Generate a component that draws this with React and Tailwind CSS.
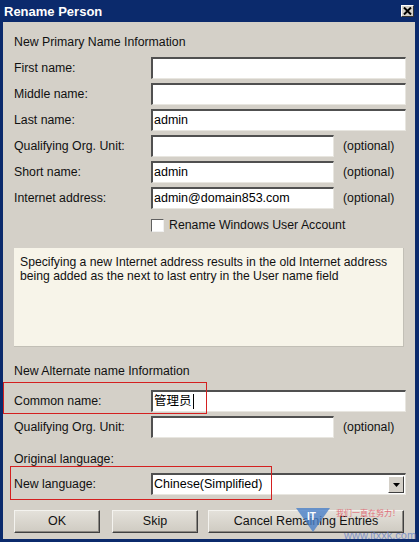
import React from 'react';

const FONT = { fontFamily: '"Liberation Sans", Arial, "Noto Sans CJK SC", sans-serif' };

function Field({ value, width = 'w-[255px]', children }) {
  return (
    <div
      className={`${width} h-[22px] bg-white border-t-2 border-l-2 border-t-[#505050] border-l-[#505050] border-b border-r border-b-[#e8e6e0] border-r-[#e8e6e0] flex items-center pl-[1px] text-[12.5px] text-black`}
    >
      {value}
      {children}
    </div>
  );
}

function Row({ label, value, short = false, optional = false, className = '' }) {
  return (
    <div className={`flex items-center h-[22px] ${className}`}>
      <div className="w-[137px] shrink-0 pt-[1px] text-[12.3px] text-[#111]">{label}</div>
      <Field value={value} width={short ? 'w-[183px]' : 'w-[255px]'} />
      {optional && <span className="ml-[9px] text-[12.3px] text-[#111]">(optional)</span>}
    </div>
  );
}

function Button({ children, width }) {
  return (
    <div
      className={`${width} h-[23px] flex items-center justify-center text-[12.5px] text-[#111] bg-gradient-to-b from-[#e4e1da] to-[#cfcbc2] border border-t-[#f4f3ef] border-l-[#f4f3ef] border-b-[#404040] border-r-[#404040] shadow-[inset_-1px_-1px_0_#8c8983]`}
    >
      {children}
    </div>
  );
}

export default function App() {
  return (
    <div className="w-[419px] h-[542px] bg-[#0b2a6c] flex flex-col overflow-hidden" style={FONT}>
      {/* Title bar */}
      <div className="h-[22px] shrink-0 flex items-center justify-between pl-[4px] pr-[5px]">
        <span className="text-white font-bold text-[13px] leading-none">Rename Person</span>
        <div className="w-[13px] h-[12px] bg-[#d4d0c8] border border-t-white border-l-white border-b-[#333] border-r-[#333] flex items-center justify-center">
          <svg width="9" height="8" viewBox="0 0 9 8">
            <path d="M1 0.5 L8 7.5 M8 0.5 L1 7.5" stroke="#000" strokeWidth="2" />
          </svg>
        </div>
      </div>

      {/* Body */}
      <div className="flex-1 ml-[3px] mr-[4px] mb-[3px] bg-[#d4d0c8] relative flex flex-col pl-[11px] pr-[9px] pt-[13px]">
        <div className="text-[12.3px] leading-[15px] text-[#111]">New Primary Name Information</div>

        <Row label="First name:" className="mt-[7px]" />
        <Row label="Middle name:" className="mt-[4px]" />
        <Row label="Last name:" value="admin" className="mt-[4px]" />
        <Row label="Qualifying Org. Unit:" short optional className="mt-[4px]" />
        <Row label="Short name:" value="admin" short optional className="mt-[4px]" />
        <Row label="Internet address:" value="admin@domain853.com" short optional className="mt-[4px]" />

        <div className="flex items-center h-[16px] mt-[8px] pl-[137px]">
          <div className="w-[13px] h-[13px] bg-white border-t border-l border-t-[#606060] border-l-[#606060] border-b border-r border-b-[#f0f0f0] border-r-[#f0f0f0]" />
          <span className="ml-[5px] text-[12.3px] text-[#111]">Rename Windows User Account</span>
        </div>

        <div className="mt-[15px] w-[390px] h-[99px] bg-[#f7f4e9] border-b border-r border-b-[#c2bfb6] border-r-[#c2bfb6] px-[6px] pt-[7px] text-[12.2px] leading-[14px] text-[#111]">
          Specifying a new Internet address results in the old Internet address being added as the next to last entry in the User name field
        </div>

        <div className="mt-[17px] text-[12.3px] leading-[15px] text-[#111]">New Alternate name Information</div>

        <div className="relative mt-[11px]">
          <div className="absolute left-[-11px] top-[-8px] w-[204px] h-[32px] border border-[#d42020]" />
          <div className="flex items-center h-[22px]">
            <div className="w-[137px] shrink-0 pt-[1px] text-[12.3px] text-[#111]">Common name:</div>
            <Field value="管理员">
              <span className="w-[1px] h-[15px] bg-black ml-[1px]" />
            </Field>
          </div>
        </div>
        <Row label="Qualifying Org. Unit:" short optional className="mt-[4px]" />

        <div className="mt-[14px] text-[12.3px] leading-[15px] text-[#111]">Original language:</div>

        <div className="relative mt-[6px]">
          <div className="absolute left-[-4px] top-[-7px] w-[262px] h-[34px] border border-[#d42020]" />
          <div className="flex items-center h-[22px]">
            <div className="w-[137px] shrink-0 pt-[1px] text-[12.3px] text-[#111]">New language:</div>
            <Field value="Chinese(Simplified)">
              <div className="ml-auto mr-[1px] w-[16px] h-[17px] bg-[#d4d0c8] border border-t-white border-l-white border-b-[#404040] border-r-[#404040] flex items-center justify-center">
                <svg width="7" height="4" viewBox="0 0 7 4">
                  <path d="M0 0 H7 L3.5 4 Z" fill="#000" />
                </svg>
              </div>
            </Field>
          </div>
        </div>

        <div className="mt-[15px] flex">
          <Button width="w-[86px]">OK</Button>
          <div className="ml-[12px]">
            <Button width="w-[86px]">Skip</Button>
          </div>
          <div className="ml-[10px]">
            <Button width="w-[196px]">Cancel Remaining Entries</Button>
          </div>
        </div>

        {/* watermark */}
        <div className="absolute left-[293px] top-[486px] w-[116px] h-[33px] pointer-events-none">
          <svg className="absolute left-0 top-0" width="34" height="24" viewBox="0 0 34 24">
            <path d="M0 0 H34 L17 24 Z" fill="#4a7fc8" opacity="0.8" />
            <text x="11" y="12" fontSize="10" fill="#fff" fontWeight="bold">IT</text>
          </svg>
          <span className="absolute left-[40px] top-[2px] whitespace-nowrap text-[8px] text-[#e0707a] leading-none">我们一直在努力！</span>
          <span className="absolute left-[48px] top-[22px] whitespace-nowrap text-[11px] text-[#6b86c8] opacity-80 leading-none">www.itxxk.com</span>
        </div>
      </div>
    </div>
  );
}
